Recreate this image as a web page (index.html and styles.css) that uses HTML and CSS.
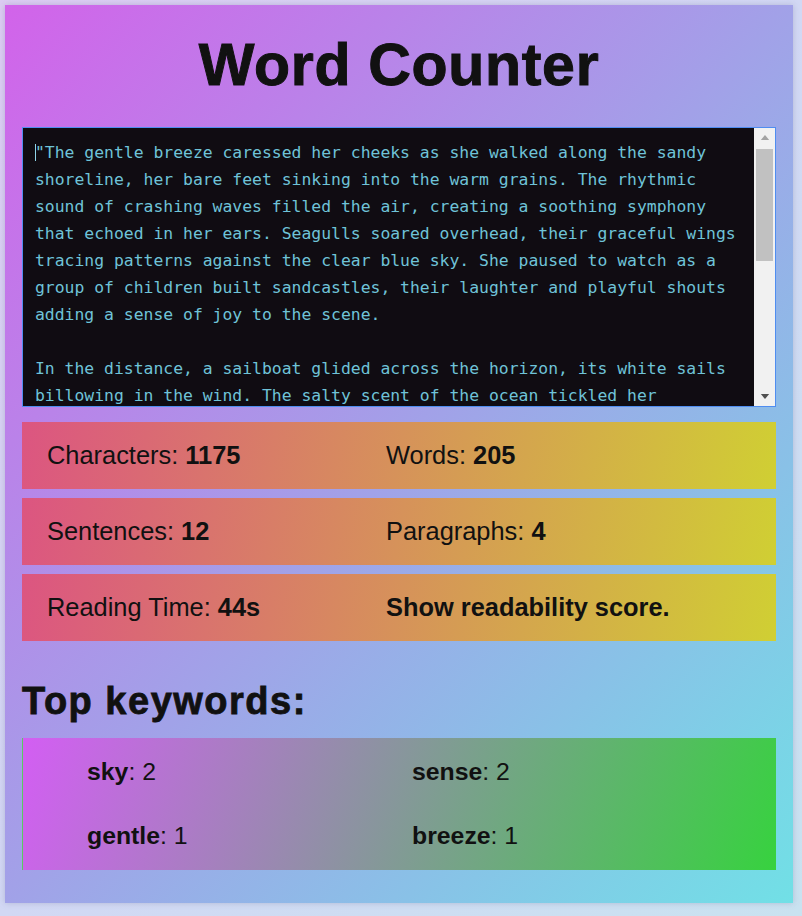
FILE: index.html
```html
<!DOCTYPE html>
<html lang="en">
<head>
<meta charset="utf-8">
<title>Word Counter</title>
<link rel="stylesheet" href="styles.css">
</head>
<body>
<main class="app">
  <h1 class="title">Word Counter</h1>
  <div class="editor-box">
    <textarea class="editor" spellcheck="false">"The gentle breeze caressed her cheeks as she walked along the sandy shoreline, her bare feet sinking into the warm grains. The rhythmic sound of crashing waves filled the air, creating a soothing symphony that echoed in her ears. Seagulls soared overhead, their graceful wings tracing patterns against the clear blue sky. She paused to watch as a group of children built sandcastles, their laughter and playful shouts adding a sense of joy to the scene.

In the distance, a sailboat glided across the horizon, its white sails billowing in the wind. The salty scent of the ocean tickled her nostrils, and she took a deep breath, savoring the moment. The sun began its slow descent, painting the sky with warm hues of orange and pink.

As twilight settled, the first stars appeared above the water. She found a quiet spot on the sand and sat down, letting the breeze carry away her worries. The waves whispered their endless stories to the shore, and she listened.

It was a perfect evening, one she would remember for a long time, a gentle reminder of the simple beauty that surrounded her every single day."</textarea>
    <span class="caret" aria-hidden="true"></span>
    <div class="scrollbar" aria-hidden="true">
      <span class="sb-btn">
        <svg width="10" height="6" viewBox="0 0 10 6"><path d="M5 0L10 6H0z" fill="#a3a3a3"/></svg>
      </span>
      <span class="sb-track"><span class="sb-thumb"></span></span>
      <span class="sb-btn">
        <svg width="10" height="6" viewBox="0 0 10 6"><path d="M0 0H10L5 6z" fill="#505050"/></svg>
      </span>
    </div>
  </div>

  <div class="stat-row">
    <div class="stat">Characters: <b>1175</b></div>
    <div class="stat">Words: <b>205</b></div>
  </div>
  <div class="stat-row">
    <div class="stat">Sentences: <b>12</b></div>
    <div class="stat">Paragraphs: <b>4</b></div>
  </div>
  <div class="stat-row">
    <div class="stat">Reading Time: <b>44s</b></div>
    <div class="stat"><b class="link">Show readability score.</b></div>
  </div>

  <h2 class="subtitle">Top keywords:</h2>
  <ul class="keywords">
    <li><b>sky</b>: 2</li>
    <li><b>sense</b>: 2</li>
    <li><b>gentle</b>: 1</li>
    <li><b>breeze</b>: 1</li>
  </ul>
</main>
</body>
</html>
```

FILE: styles.css
```css
html, body {
  margin: 0;
  padding: 0;
}

body {
  min-height: 916px;
  background: linear-gradient(to bottom right, #dccbf2 0%, #d2d8f4 50%, #c9e2f0 100%);
  font-family: "Liberation Sans", Arial, sans-serif;
  color: #111111;
  padding: 5px 9px 13px 5px;
  box-sizing: border-box;
}

.app {
  width: 788px;
  box-sizing: border-box;
  padding: 1px 17px 33px 17px;
  background: linear-gradient(to bottom right, #d263ea 0%, #71e0e6 100%);
  box-shadow: 0 0 6px rgba(120, 120, 160, 0.35);
}

.title {
  margin: 24px 0 27px;
  text-align: center;
  font-size: 59px;
  line-height: 70px;
  font-weight: 700;
  letter-spacing: 0.7px;
  -webkit-text-stroke: 1px #111111;
  color: #111111;
}

.editor-box {
  position: relative;
  display: flex;
  height: 280px;
  box-sizing: border-box;
  margin: 0 0 15px;
  border: 1px solid #4f8df0;
  background: #100c12;
}

.editor {
  flex: 1;
  min-width: 0;
  box-sizing: border-box;
  margin: 0;
  padding: 11px 12px 12px;
  border: 0;
  background: transparent;
  color: #6fc3d8;
  font-family: "DejaVu Sans Mono", "Liberation Mono", monospace;
  font-size: 16.4px;
  line-height: 27px;
  resize: none;
  outline: none;
  overflow: hidden;
}

.caret {
  position: absolute;
  left: 12px;
  top: 16px;
  width: 1px;
  height: 17px;
  background: #8fd4e8;
}

.scrollbar {
  flex: 0 0 21px;
  display: flex;
  flex-direction: column;
  background: #f1f1f1;
}

.sb-btn {
  flex: 0 0 19px;
  display: flex;
  align-items: center;
  justify-content: center;
}

.sb-btn svg {
  display: block;
  width: 10px;
  height: 5px;
}

.sb-track {
  flex: 1;
  display: flex;
  flex-direction: column;
  padding: 2px 2px 0;
}

.sb-thumb {
  height: 112px;
  background: #c1c1c1;
}

.stat-row {
  display: grid;
  grid-template-columns: 339px 1fr;
  align-items: center;
  height: 67px;
  padding-left: 25px;
  margin-bottom: 9px;
  background: linear-gradient(100deg, #dc5581 0%, #d0cf33 100%);
  font-size: 25.4px;
}

.stat b {
  font-weight: 700;
}

.link {
  cursor: pointer;
}

.subtitle {
  margin: 38px 0 15px;
  font-size: 38px;
  line-height: 44px;
  font-weight: 700;
  letter-spacing: 1.5px;
  -webkit-text-stroke: 0.8px #111111;
}

.keywords {
  list-style: none;
  margin: 0;
  padding: 2px 0 2px 64px;
  display: grid;
  grid-template-columns: 325px 1fr;
  grid-auto-rows: 64px;
  align-items: center;
  border-left: 1px solid #5cc862;
  background: linear-gradient(110deg, #d35ef3 0%, #37d23f 100%);
  font-size: 24.8px;
}

.keywords b {
  font-weight: 700;
}
```
